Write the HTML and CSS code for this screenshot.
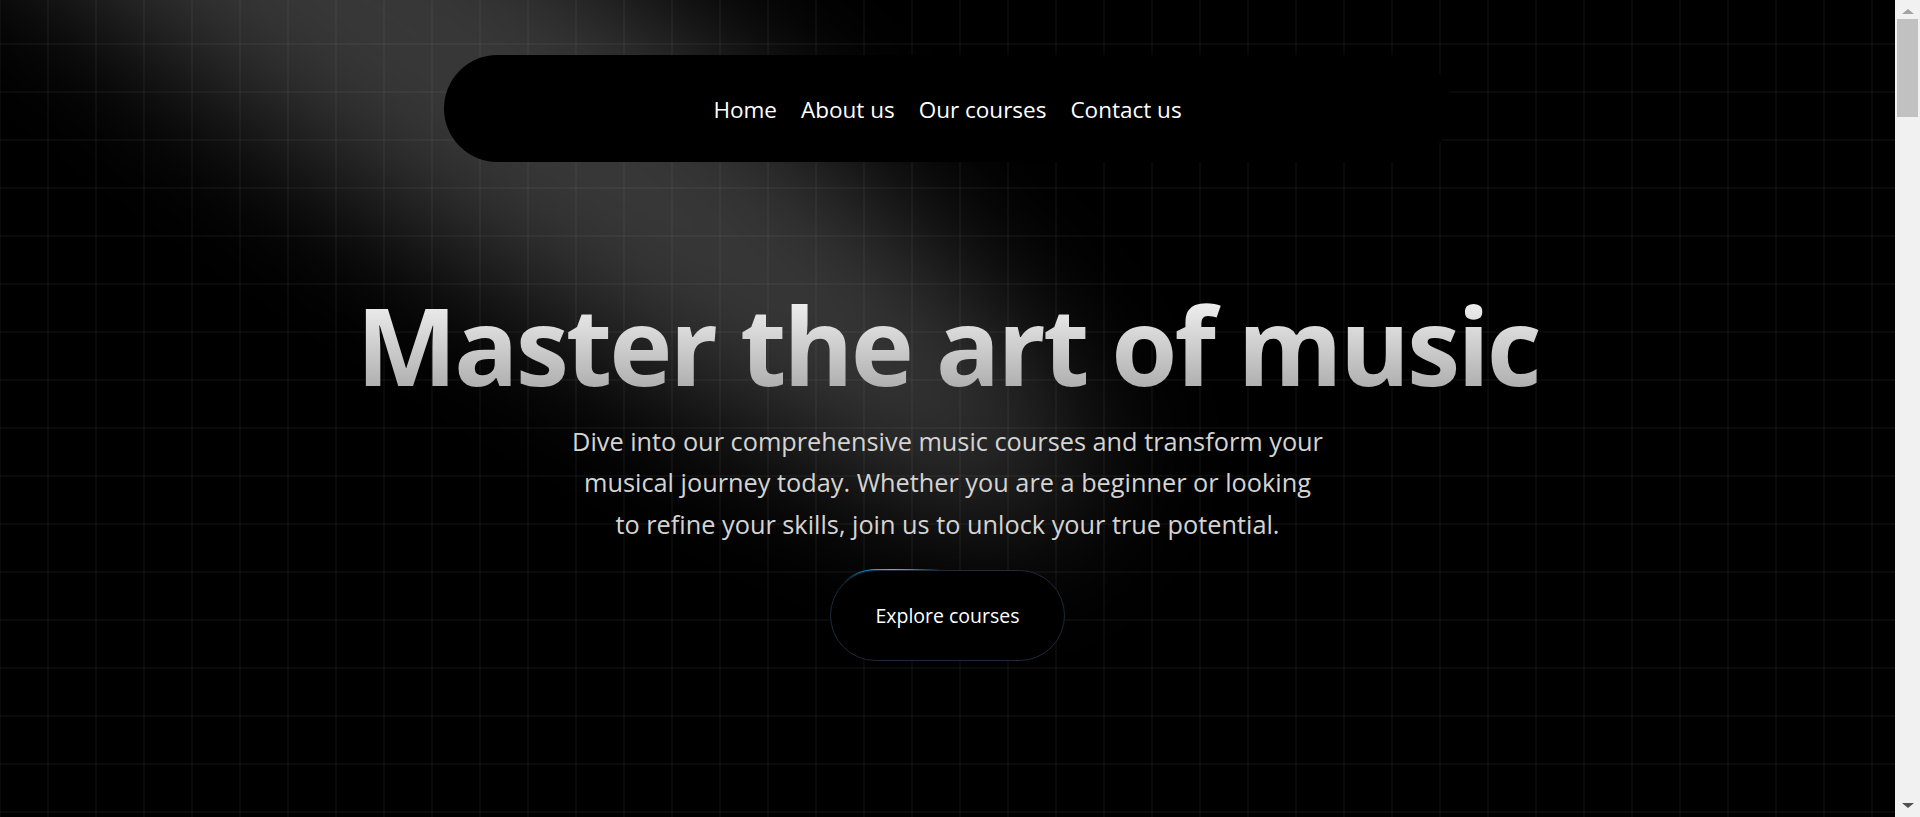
FILE: index.html
```html
<!DOCTYPE html>
<html lang="en">
<head>
<meta charset="utf-8">
<title>Music School</title>
<link rel="stylesheet" href="styles.css">
</head>
<body>
<div class="page">
  <section class="hero">
    <div class="spotlight"></div>
    <nav class="nav-pill">
      <a class="nav-link" href="#">Home</a>
      <a class="nav-link" href="#">About us</a>
      <a class="nav-link" href="#">Our courses</a>
      <a class="nav-link" href="#">Contact us</a>
    </nav>
    <div class="hero-content">
      <h1 class="title">Master the art of music</h1>
      <p class="lead">Dive into our comprehensive music courses and transform your<br>musical journey today. Whether you are a beginner or looking<br>to refine your skills, join us to unlock your true potential.</p>
      <a class="btn-ring" href="#"><span class="btn">Explore courses</span></a>
    </div>
  </section>
  <section class="below"></section>
</div>
<div class="scrollbar" aria-hidden="true">
  <span class="sb-arrow sb-up"></span>
  <span class="sb-track"><span class="sb-thumb"></span></span>
  <span class="sb-arrow sb-down"></span>
</div>
</body>
</html>
```

FILE: styles.css
```css
html, body {
  margin: 0;
  padding: 0;
}

body {
  background-color: #000;
  background-image:
    linear-gradient(to right, rgba(255, 255, 255, 0.035) 2px, transparent 2px),
    linear-gradient(to bottom, rgba(255, 255, 255, 0.035) 2px, transparent 2px);
  background-size: 48px 48px;
  background-position: 47px 43px;
  font-family: "Open Sans", "Noto Sans", sans-serif;
  color: #fff;
}

.page {
  margin-right: 25px;
}

.hero {
  position: relative;
  height: 817px;
  overflow: hidden;
}

.spotlight {
  position: absolute;
  left: -470px;
  top: -150px;
  width: 1700px;
  height: 320px;
  border-radius: 50%;
  background: rgba(255, 255, 255, 0.22);
  filter: blur(70px);
  transform: rotate(35deg);
  pointer-events: none;
  z-index: 0;
}

.nav-pill {
  position: relative;
  z-index: 2;
  width: 1008px;
  height: 107px;
  margin: 55px auto 0;
  padding-top: 2px;
  box-sizing: border-box;
  background: #000;
  border-radius: 999px;
  display: flex;
  align-items: center;
  justify-content: center;
  gap: 24px;
}

.nav-link {
  color: #fff;
  text-decoration: none;
  font-size: 22.5px;
  line-height: 1.4;
}

.hero-content {
  position: relative;
  z-index: 2;
  display: flex;
  flex-direction: column;
  align-items: center;
  padding-top: 124px;
}

.title {
  margin: 0;
  font-size: 107px;
  font-weight: 700;
  letter-spacing: -3px;
  line-height: 1.1;
  text-align: center;
  background: linear-gradient(to bottom, #fafafa, #a3a3a3);
  -webkit-background-clip: text;
  background-clip: text;
  color: transparent;
}

.lead {
  margin: 17px 0 0;
  font-size: 25.3px;
  line-height: 41.5px;
  color: #d4d4d4;
  text-align: center;
}

.btn-ring {
  margin-top: 24px;
  width: 237px;
  height: 93px;
  padding: 1px;
  box-sizing: border-box;
  border-radius: 999px;
  text-decoration: none;
  background: radial-gradient(circle 50px at 62px 0px, #38bdf8 0%, #0ea5e9 35%, rgba(14, 165, 233, 0) 100%);
  display: flex;
}

.btn {
  flex: 1;
  display: flex;
  align-items: center;
  justify-content: center;
  background: #000;
  border: 1px solid #1e2a3b;
  border-radius: 999px;
  color: #fff;
  font-size: 19.5px;
}

.below {
  height: 5513px;
}

/* static replica of the browser's vertical scrollbar */
.scrollbar {
  position: fixed;
  top: 0;
  right: 0;
  bottom: 0;
  width: 25px;
  background: #f1f1f1;
  display: flex;
  flex-direction: column;
  z-index: 10;
}

.sb-arrow {
  height: 17px;
  display: flex;
  justify-content: center;
}

.sb-up {
  align-items: flex-end;
}

.sb-down {
  align-items: flex-start;
}

.sb-up::before,
.sb-down::before {
  content: "";
  width: 0;
  height: 0;
  border-left: 6px solid transparent;
  border-right: 6px solid transparent;
}

.sb-up::before {
  border-bottom: 5px solid #a3a3a3;
  margin-bottom: 3px;
}

.sb-down::before {
  border-top: 5px solid #505050;
  margin-top: 3px;
}

.sb-track {
  flex: 1;
  padding: 2px 2px 0;
}

.sb-thumb {
  display: block;
  height: 98px;
  background: #c1c1c1;
}
```
